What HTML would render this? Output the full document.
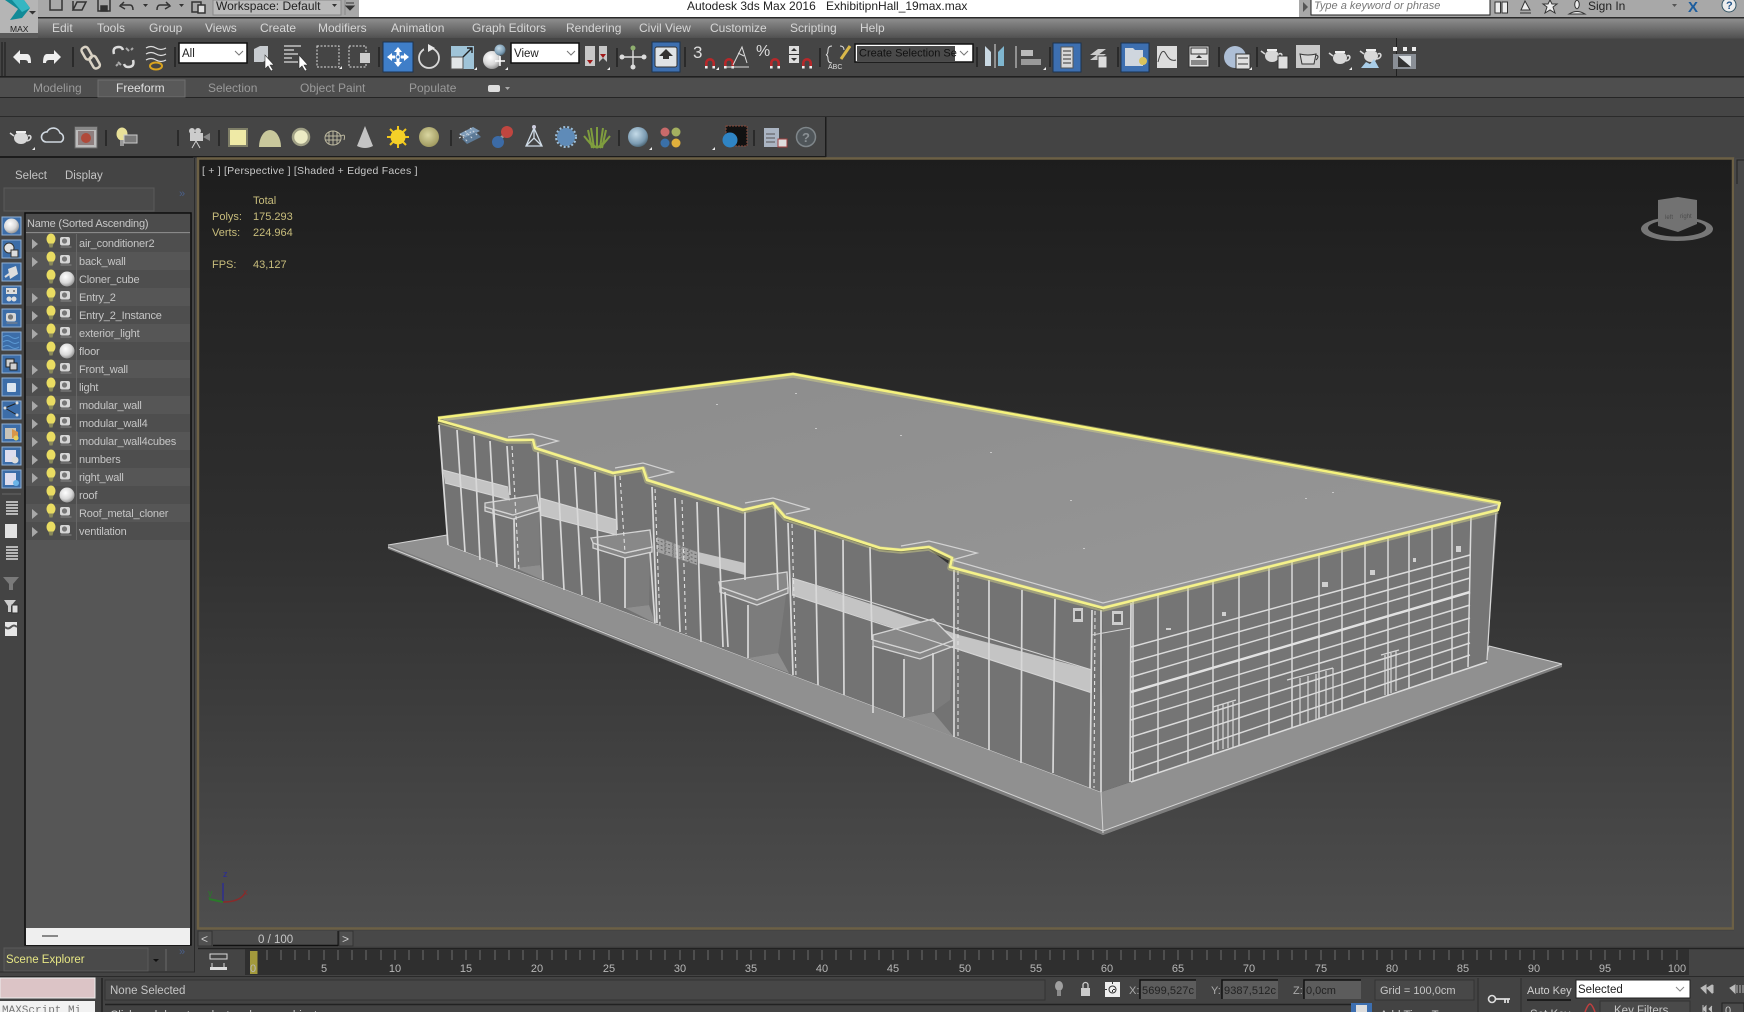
<!DOCTYPE html>
<html><head><meta charset="utf-8"><title>Autodesk 3ds Max 2016</title>
<style>
html,body{margin:0;padding:0;background:#444;width:1744px;height:1012px;overflow:hidden}
svg{display:block;position:absolute;left:0;top:0}
text{font-family:"Liberation Sans",sans-serif}
.m{font-size:12px;fill:#d6d6d6}
.t{font-size:12px;fill:#9a9a9a}
.r{font-size:11px;fill:#c6c6c6;letter-spacing:-.18px}
.s{font-size:11px;fill:#c8bd7c}
.n{font-size:11px;fill:#b8b8b8;text-anchor:middle}
.b{font-size:11.5px;fill:#c4c4c4}
</style></head><body>
<svg width="1744" height="1012" viewBox="0 0 1744 1012" xmlns="http://www.w3.org/2000/svg">
<defs>
<linearGradient id="vp" x1="0" y1="0" x2="0" y2="1"><stop offset="0" stop-color="#1d1d1d"/><stop offset=".5" stop-color="#303030"/><stop offset="1" stop-color="#4e4e4e"/></linearGradient>
<linearGradient id="menu" x1="0" y1="0" x2="0" y2="1"><stop offset="0" stop-color="#8e8e8e"/><stop offset="1" stop-color="#4f4f4f"/></linearGradient>
<linearGradient id="roof" x1="0" y1="0" x2="1" y2="1"><stop offset="0" stop-color="#8c8c8c"/><stop offset="1" stop-color="#979797"/></linearGradient>
<radialGradient id="sph" cx=".4" cy=".35" r=".7"><stop offset="0" stop-color="#fff"/><stop offset=".6" stop-color="#d8d8d8"/><stop offset="1" stop-color="#8a8a8a"/></radialGradient>
<radialGradient id="bsph" cx=".4" cy=".35" r=".7"><stop offset="0" stop-color="#c4dbe8"/><stop offset=".7" stop-color="#7b9bb2"/><stop offset="1" stop-color="#48616f"/></radialGradient>
<radialGradient id="ysph" cx=".45" cy=".4" r=".6"><stop offset="0" stop-color="#d9d6a0"/><stop offset="1" stop-color="#a09a60"/></radialGradient>
<g id="pot"><ellipse cx="0" cy="1" rx="7" ry="6" fill="#d8d8d8"/><path d="M-7-1L-11-4M7-1C11-3 11 3 6 4" stroke="#d8d8d8" stroke-width="1.6" fill="none"/><rect x="-5" y="-6" width="10" height="2" fill="#eee"/></g>
<g id="bulb"><ellipse cx="0" cy="-3" rx="4.500" ry="5.500" fill="#e9dc62"/><path d="M-2.500 1.500h5l-1 4h-3Z" fill="#8a8a5a"/></g>
<g id="obj"><rect x="-5" y="-5" width="10" height="8.500" rx="2" fill="#d6d6d6"/><circle cx="-.5" cy="-1" r="2.600" fill="#777"/><path d="M-4.500 5h11" stroke="#888"/></g>
<path id="arr" d="M-3-5L3 0L-3 5Z" fill="#a8a8a8"/>
<g id="mag"><path d="M-5 5V0a5 5 0 0 1 10 0V5H2.400V0a2.400 2.400 0 0 0-4.800 0V5Z" fill="#b8282a"/><rect x="-5" y="3" width="2.600" height="2.500" fill="#eee"/><rect x="2.400" y="3" width="2.600" height="2.500" fill="#eee"/></g>
<path id="tri" d="M0 3L3 0V3Z" fill="#eee"/>
</defs>

<!-- base -->
<rect width="1744" height="1012" fill="#444"/>
<!-- title bar -->
<rect width="1744" height="17" fill="#a8a8a8"/>
<rect x="359" width="940" height="17" fill="#fff"/>
<rect y="17" width="1744" height="1.500" fill="#2a2a2a"/>
<text x="687" y="10" font-size="12" fill="#222">Autodesk 3ds Max 2016</text>
<text x="826" y="10" font-size="12" fill="#222">ExhibitipnHall_19max.max</text>
<!-- Max logo -->
<rect width="38" height="33" fill="#b5b5b5"/>
<path d="M5 0H24L30 8L22 18L10 20L18 9Z" fill="#118a97"/><path d="M12 0H24L30 8L22 12Z" fill="#35b6c2"/>
<text x="10" y="32" font-size="8.500" fill="#222">MAX</text>
<path d="M29 11h7l-3.500 3.500Z" fill="#333"/>
<!-- QAT -->
<g fill="none" stroke="#333" stroke-width="1.500">
<path d="M50 0V10H62V0"/><path d="M73 10L77 2H86L82 10ZM73 10V1"/><rect x="98" y="-2" width="12" height="13"/><rect x="101" y="6" width="6" height="5" fill="#333"/>
<path d="M124 2L120 6L125 9M120 5H130Q133 5 133 10"/><path d="M166 2L170 6L165 9M170 5H160Q157 5 157 10"/>
<rect x="192" y="2" width="9" height="10"/><rect x="198" y="5" width="7" height="8" fill="#ddd"/></g>
<path d="M143 4h5l-2.500 3ZM179 4h5l-2.500 3Z" fill="#333"/>
<rect x="213" y="0" width="128" height="15" fill="#bbb" stroke="#888"/>
<text x="216" y="10" font-size="12" fill="#222">Workspace: Default</text>
<path d="M332 4h5l-2.500 3Z" fill="#333"/>
<path d="M345 0V15" stroke="#888"/><path d="M346 3h8M346 6h8l-4 4Z" fill="#333" stroke="#333"/>
<!-- search -->
<path d="M1303 2L1303 12L1308 7Z" fill="#555"/>
<rect x="1311" y="-1" width="179" height="16" fill="#fff" stroke="#222"/>
<text x="1314" y="9" font-size="11" font-style="italic" fill="#777">Type a keyword or phrase</text>
<g fill="#eee" stroke="#333"><rect x="1495" y="2" width="5.500" height="11"/><rect x="1502" y="2" width="5.500" height="11"/></g>
<path d="M1525 1L1530 10H1521ZM1520 13H1531" stroke="#333" fill="#eee"/>
<path d="M1550 0l2 4h5l-4 3 2 6-5-3-5 3 2-6-4-3h5Z" fill="#eee" stroke="#333"/>
<path d="M1577 0a4 5 0 0 1 0 9M1577 0a4 5 0 0 0 0 9M1569 14q8-5 16 0Z" fill="#eee" stroke="#333"/>
<text x="1588" y="10" font-size="12" fill="#222">Sign In</text>
<path d="M1672 4h5l-2.500 3Z" fill="#555"/>
<text x="1688" y="12" font-size="15" font-weight="bold" fill="#1c5d9e">X</text>
<circle cx="1729" cy="5" r="7" fill="#eee" stroke="#356"/><text x="1726" y="9" font-size="11" font-weight="bold" fill="#24568a">?</text>

<!-- menu bar -->
<rect x="38" y="18.500" width="1706" height="20" fill="url(#menu)"/>
<rect y="33" width="38" height="5" fill="#5a5a5a"/>
<g class="m">
<text class="m" x="52" y="32">Edit</text><text class="m" x="97" y="32">Tools</text><text class="m" x="149" y="32">Group</text><text class="m" x="205" y="32">Views</text><text class="m" x="260" y="32">Create</text><text class="m" x="318" y="32">Modifiers</text><text class="m" x="391" y="32">Animation</text><text class="m" x="472" y="32">Graph Editors</text><text class="m" x="566" y="32">Rendering</text><text class="m" x="639" y="32">Civil View</text><text class="m" x="710" y="32">Customize</text><text class="m" x="790" y="32">Scripting</text><text class="m" x="860" y="32">Help</text>
</g>

<!-- main toolbar -->
<rect y="38" width="1396" height="38" fill="#454545"/>
<rect y="76" width="1744" height="1.500" fill="#202020"/>
<rect x="1396" y="38" width="1" height="38" fill="#202020"/>
<path d="M2 42V76M5 42V76M2 80V116M5 80V116M2 122V156M5 122V156" stroke="#2a2a2a" stroke-width="1.500"/>
<!-- undo redo -->
<path d="M13 57L20 50V54H27Q31 54 31 63H28Q28 60 25 60H20V64Z" fill="#eee"/>
<path d="M61 57L54 50V54H47Q43 54 43 63H46Q46 60 49 60H54V64Z" fill="#eee"/>
<path d="M73 47V67" stroke="#222" stroke-width="1.500"/>
<!-- link -->
<g fill="none" stroke="#d9d2c4" stroke-width="2.500"><rect x="83" y="47" width="7" height="13" rx="3" transform="rotate(-30 86 53)"/><rect x="91" y="56" width="7" height="13" rx="3" transform="rotate(-30 94 62)"/>
<path d="M114 54Q112 47 119 47Q122 47 123 50M133 60Q135 67 128 67Q125 67 124 64" stroke="#dcdcdc"/></g>
<path d="M126 48l3 3M131 50l2-2M118 62l3 3M116 66l2-2" stroke="#aaa" stroke-width="2"/>
<path d="M146 48q5-3 10 0t10 0M146 54q5-3 10 0t10 0M146 60q5-3 10 0t10 0" fill="none" stroke="#ddd" stroke-width="1.300"/>
<ellipse cx="156" cy="66" rx="6" ry="3.500" fill="none" stroke="#d9a31f" stroke-width="2"/>
<path d="M175 47V67" stroke="#222" stroke-width="1.500"/>
<rect x="179" y="43" width="68" height="20" fill="#fff" stroke="#111" stroke-width="1.500"/>
<text x="182" y="57" font-size="11.500" fill="#222">All</text>
<path d="M235 51l4 4 4-4" fill="none" stroke="#777"/>
<!-- sel obj -->
<path d="M254 49l6-3h8v13l-5 3h-9Z" fill="#c8ccd0"/><path d="M265 55V69L268 66L271 71L273 70L270 65H274Z" fill="#fff" stroke="#333" stroke-width=".6"/>
<path d="M284 46h17M284 50h10M284 54h14M284 58h8M284 62h14" stroke="#ddd" stroke-width="1.300"/><path d="M299 55V69L302 66L305 71L307 70L304 65H308Z" fill="#fff" stroke="#333" stroke-width=".6"/>
<rect x="317" y="46" width="22" height="21" fill="none" stroke="#ddd" stroke-dasharray="2 1.500"/><use href="#tri" x="339" y="66"/>
<rect x="349" y="46" width="17" height="21" fill="none" stroke="#ddd" stroke-dasharray="2 1.500"/><rect x="360" y="53" width="10" height="10" fill="#ccc"/>
<path d="M379 47V67" stroke="#222" stroke-width="1.500"/>
<!-- move -->
<rect x="383" y="42" width="30" height="30" fill="#3f7ec8" stroke="#1c3350"/>
<path d="M398 47l4 5h-2.500v3h-3v-3H394ZM398 67l4-5h-2.500v-3h-3v3H394ZM387 57l5-4v2.500h3v3h-3V61ZM409 57l-5-4v2.500h-3v3h3V61Z" fill="#fff"/><circle cx="398" cy="57" r="2" fill="none" stroke="#fff"/>
<circle cx="429" cy="58" r="10" fill="none" stroke="#d8d8d8" stroke-width="1.800"/><path d="M428 44l7 4-7 4Z" fill="#e8e8e8"/><rect x="424" y="44" width="4" height="6" fill="#454545"/>
<!-- scale -->
<rect x="451" y="46" width="23" height="23" fill="#9fc4d8"/><rect x="451" y="57" width="12" height="12" fill="#e2e6e8" stroke="#555"/><path d="M463 57L472 48M467 48h5v5" stroke="#222" stroke-width="1.400" fill="none"/><use href="#tri" x="474" y="67"/>
<circle cx="492" cy="60" r="9" fill="url(#sph)"/><circle cx="500" cy="50" r="5.500" fill="url(#bsph)"/><path d="M500 56v10M495 61h10" stroke="#fff" stroke-width="1.500"/><use href="#tri" x="505" y="67"/>
<rect x="511" y="43" width="68" height="20" fill="#fff" stroke="#111" stroke-width="1.500"/>
<text x="514" y="57" font-size="11.500" fill="#222">View</text>
<path d="M567 51l4 4 4-4" fill="none" stroke="#777"/>
<!-- named tools -->
<rect x="585" y="46" width="10" height="20" fill="#c8c8c8"/><path d="M590 64l-3-4h6Z" fill="#a01818"/><path d="M599 46h8v16l-4-4-4 4Z" fill="#c8c8c8"/><path d="M603 58l-3-4h6Z" fill="#a01818"/><use href="#tri" x="607" y="67"/>
<path d="M617 48V67" stroke="#222" stroke-width="1.500"/>
<path d="M622 57h22M633 47v20" stroke="#ddd" stroke-width="1.400"/><circle cx="633" cy="48" r="2.500" fill="#8faf6f"/><circle cx="622" cy="57" r="2.500" fill="#ddd"/><circle cx="644" cy="57" r="2.500" fill="#ddd"/><circle cx="633" cy="67" r="2.500" fill="#ddd"/>
<rect x="652" y="42" width="28" height="30" fill="#3d6fb0" stroke="#1c3350"/><rect x="655" y="47" width="22" height="20" rx="2" fill="#dfe3e6" stroke="#333"/><path d="M666 49l7 7h-4v3h-6v-3h-4Z" fill="#333"/>
<path d="M685 47V67" stroke="#222" stroke-width="1.500"/>
<!-- snaps -->
<text x="693" y="58" font-size="17" fill="#ddd">3</text><use href="#mag" x="710" y="63"/><use href="#tri" x="716" y="67"/>
<use href="#mag" x="729" y="63"/><path d="M726 67H749M733 65L742 47L747 63M738 53l6 3" fill="none" stroke="#ddd"/>
<text x="756" y="56" font-size="16" fill="#ddd">%</text><use href="#mag" x="775" y="63"/>
<rect x="789" y="46" width="10" height="17" fill="#ddd"/><path d="M794 48l3 3h-6ZM794 61l3-3h-6Z" fill="#333"/><path d="M789 54.500h10" stroke="#333"/><use href="#mag" x="807" y="63"/>
<path d="M820 48V67" stroke="#222" stroke-width="1.500"/>
<path d="M832 46q-4 0-4 4t-2 5q2 0 2 4t4 4M840 46q4 0 4 4" fill="none" stroke="#ddd"/><path d="M841 59L850 46" stroke="#d9b84a" stroke-width="3"/><text x="828" y="69" font-size="7" fill="#ddd">ABC</text>
<rect x="855" y="44" width="118" height="18" fill="#fff" stroke="#111" stroke-width="1.500"/>
<rect x="857" y="46" width="98" height="15" fill="#4a4a4a"/>
<text x="859" y="56.500" font-size="11" fill="#111">Create Selection Se</text>
<path d="M960 51l4 4 4-4" fill="none" stroke="#777"/>
<path d="M977 47V67" stroke="#222" stroke-width="1.500"/>
<!-- mirror align -->
<path d="M985 46l6 6v14h-6Z" fill="#c9d8e2"/><path d="M1004 46l-6 6v14h6Z" fill="#7fb6cf"/><path d="M995 44v24" stroke="#ddd"/>
<path d="M1016 46v22" stroke="#ddd"/><rect x="1021" y="50" width="12" height="6" fill="#bbb"/><rect x="1021" y="59" width="20" height="6" fill="#999"/><use href="#tri" x="1043" y="67"/>
<path d="M1050 47V67" stroke="#222" stroke-width="1.500"/>
<rect x="1053" y="43" width="28" height="29" fill="#3d6fb0" stroke="#1c3350"/><rect x="1061" y="47" width="12" height="21" fill="#d8d8d8" stroke="#555"/><path d="M1063 51h8M1063 55h8M1063 59h8M1063 63h8" stroke="#555" stroke-width="1.200"/>
<path d="M1090 55l8-6h8l-8 6ZM1090 60l8-6h8l-8 6Z" fill="#ccc"/><rect x="1098" y="56" width="9" height="12" fill="#ddd" stroke="#444"/>
<path d="M1118 47V67" stroke="#222" stroke-width="1.500"/>
<rect x="1121" y="43" width="28" height="29" fill="#3d6fb0" stroke="#1c3350"/><path d="M1125 48h8l2 2h8v16h-18Z" fill="#cfd6de"/><circle cx="1143" cy="61" r="4" fill="#d9c35e"/>
<rect x="1157" y="46" width="20" height="22" fill="#ddd"/><path d="M1158 62q4-16 8-8t10 6" fill="none" stroke="#444"/>
<rect x="1189" y="46" width="20" height="21" fill="#e0e0e0" stroke="#333"/><rect x="1191" y="48" width="16" height="6" fill="#e0e0e0" stroke="#333"/><rect x="1191" y="60" width="16" height="5" fill="#888"/><path d="M1199 55l3 3h-6Z" fill="#333"/>
<path d="M1219 47V67" stroke="#222" stroke-width="1.500"/>
<circle cx="1235" cy="57" r="11" fill="#aebfd6"/><rect x="1236" y="54" width="14" height="15" fill="#e0e0e0" stroke="#333"/><path d="M1238 58h10M1238 64h10" stroke="#333"/><use href="#tri" x="1249" y="67"/>
<path d="M1257 47V67" stroke="#222" stroke-width="1.500"/>
<use href="#pot" x="1272" y="55"/><rect x="1278" y="56" width="10" height="13" fill="#ddd" stroke="#333"/>
<rect x="1296" y="45" width="24" height="23" fill="#c8c8c8"/><path d="M1300 54q8 2 16 0l-2 10h-12Z" fill="#d8d8d8" stroke="#333"/><path d="M1316 55q4 1 0 5" fill="none" stroke="#333"/>
<use href="#pot" x="1340" y="57"/><use href="#tri" x="1349" y="67"/>
<use href="#pot" x="1371" y="55"/><path d="M1361 68l5-6 4 2 4-5 5 9Z" fill="#a9cde8"/>
<path d="M1393 47h4v4h-4ZM1403 47h4v4h-4ZM1412 47h4v4h-4Z" fill="#eee"/><rect x="1393" y="54" width="23" height="15" fill="#8a8f96"/><rect x="1398" y="56" width="13" height="11" fill="#dfe3e6"/><path d="M1398 56l13 11h-13Z" fill="#333"/>

<!-- ribbon -->
<rect y="78" width="1744" height="19" fill="#4e4e4e"/>
<rect y="97" width="1744" height="1" fill="#252525"/>
<rect y="98" width="1744" height="18" fill="#454545"/>
<rect y="116" width="1744" height="1" fill="#2b2b2b"/>
<rect x="98" y="80" width="87" height="17" fill="#595959" stroke="#6e6e6e"/>
<text class="t" x="33" y="92">Modeling</text>
<text x="116" y="92" font-size="12" fill="#e0e0e0">Freeform</text>
<text class="t" x="208" y="92">Selection</text>
<text class="t" x="300" y="92">Object Paint</text>
<text class="t" x="409" y="92">Populate</text>
<rect x="488" y="85" width="12" height="7" rx="2" fill="#ddd"/><path d="M505 87h5l-2.500 3Z" fill="#aaa"/>

<!-- command toolbar -->
<rect y="117" width="826" height="39" fill="#454545"/>
<rect y="156" width="826" height="1.500" fill="#1c1c1c"/><rect x="825" y="117" width="1.500" height="40" fill="#1c1c1c"/>
<use href="#pot" x="21" y="137"/><use href="#tri" x="32" y="147"/>
<path d="M46 142a5 5 0 0 1 1-10a7 7 0 0 1 13 1a5 5 0 0 1 1 9Z" fill="none" stroke="#d0d8e0" stroke-width="1.600"/>
<rect x="75" y="127" width="22" height="21" fill="#bcbcbc" stroke="#666"/><rect x="75" y="127" width="22" height="3" fill="#888"/><rect x="78" y="131" width="16" height="14" fill="#8e7f7f"/><circle cx="86" cy="138" r="5" fill="#b04a3a"/>
<path d="M106 130V146" stroke="#222" stroke-width="1.500"/>
<ellipse cx="122" cy="134" rx="5.500" ry="6.500" fill="#e8e098"/><path d="M120 140h4v6h-4Z" fill="#999"/>
<rect x="124" y="135" width="13" height="8" fill="#7a7a7a" stroke="#ccc"/>
<path d="M178 130V146M219 130V146" stroke="#222" stroke-width="1.500"/>
<rect x="190" y="133" width="13" height="8" fill="#ccc"/><circle cx="192" cy="131" r="3" fill="#ccc"/><circle cx="198" cy="131" r="3" fill="#ccc"/><path d="M203 137l7-4v8Z" fill="#888"/><path d="M196 141l-4 7M196 141l4 7" stroke="#ccc"/>
<rect x="229" y="129" width="18" height="17" fill="#efeaa6" stroke="#7f7f68" stroke-width="2"/>
<path d="M259 147A11 17 0 0 1 281 147Z" fill="#c9c89c"/>
<circle cx="301" cy="137" r="8" fill="#ecebc4" stroke="#9f9f85" stroke-width="2.500"/>
<g fill="none" stroke="#bdb9a0" stroke-width="1"><ellipse cx="333" cy="138" rx="8" ry="7"/><path d="M325 136h16M325 140h16M329 132v12M333 131v14M337 132v12M341 136q5-3 3 4"/></g>
<path d="M365 126l8 20q-8 4-16 0Z" fill="#c4c4c4"/>
<g stroke="#f2c71a" stroke-width="2"><path d="M398 126v22M387 137h22M390 129l16 16M406 129l-16 16"/></g><circle cx="398" cy="137" r="7.500" fill="#f5d028"/>
<circle cx="429" cy="137" r="10" fill="url(#ysph)"/>
<path d="M451 130V146" stroke="#222" stroke-width="1.500"/>
<g fill="#7f9cb8"><path d="M459 134l14-7 7 4-14 7Z"/><path d="M462 139l14-7 5 5-14 7Z" fill="#5d7a96"/></g><path d="M460 134l8 8M465 131l8 8M470 128l8 8M459 138l12-6" stroke="#d0d8e0" stroke-dasharray="2 2"/>
<path d="M497 141l10-8" stroke="#999" stroke-width="3"/><circle cx="498" cy="142" r="6" fill="#3c6ba6"/><circle cx="507" cy="132" r="6" fill="#c04640"/>
<path d="M534 128l-8 18h16ZM526 146l8-8 8 8M534 128v10" fill="none" stroke="#cfdbe6" stroke-width="1.300"/><circle cx="534" cy="127" r="2" fill="#ccd"/>
<circle cx="566" cy="137" r="9" fill="#5f8bb8"/><circle cx="566" cy="137" r="10" fill="none" stroke="#9cc0dd" stroke-width="2" stroke-dasharray="2 2"/>
<path d="M592 148L588 130M594 148L591 128M597 148V127M600 148L603 128M602 148L606 130M594 148L584 136M600 148L610 136M597 148L587 140M597 148L607 140" stroke="#7f9d3e" stroke-width="2"/>
<path d="M619 130V146" stroke="#222" stroke-width="1.500"/>
<circle cx="638" cy="137" r="10" fill="url(#bsph)"/><use href="#tri" x="649" y="147"/>
<circle cx="665" cy="132" r="4.500" fill="#c86a6a"/><circle cx="676" cy="132" r="4.500" fill="#a4b060"/><circle cx="665" cy="143" r="4.500" fill="#3a70a8"/><circle cx="676" cy="143" r="4.500" fill="#e0b03c"/>
<use href="#tri" x="712" y="147"/>
<rect x="726" y="126" width="21" height="20" fill="#111" stroke="#8a4a3a" stroke-dasharray="2 1"/><circle cx="730" cy="140" r="7.500" fill="#2f84c4"/>
<path d="M754 130V146" stroke="#222" stroke-width="1.500"/>
<rect x="764" y="128" width="15" height="19" fill="#aab4c2"/><path d="M766 134h9M766 138h9M766 142h9" stroke="#555"/><rect x="778" y="139" width="9" height="8" fill="#ddd" stroke="#a04040"/>
<circle cx="806" cy="137" r="9.500" fill="#4f5559" stroke="#7f868a" stroke-width="1.500"/><text x="802" y="142" font-size="13" font-weight="bold" fill="#8a9094">?</text>

<!-- left panel -->
<rect y="158" width="197" height="818" fill="#444"/>
<path d="M0 157.500H193" stroke="#1c1c1c"/>
<text x="15" y="179" font-size="11.500" fill="#c4c4c4">Select</text>
<text x="65" y="179" font-size="11.500" fill="#c4c4c4">Display</text>
<rect x="4" y="188" width="150" height="23" fill="#4a4a4a" stroke="#5a5a5a"/>
<text x="179" y="197" font-size="11" fill="#4a5f88">»</text>
<path d="M194.500 158V972H0" fill="none" stroke="#2b2b2b"/>

<!-- left buttons -->
<g fill="#3c6da8" stroke="#8fb0d4">
<rect x="2" y="217" width="19" height="18"/><rect x="2" y="240" width="19" height="18"/><rect x="2" y="263" width="19" height="18"/><rect x="2" y="286" width="19" height="18"/><rect x="2" y="309" width="19" height="18"/><rect x="2" y="332" width="19" height="18"/><rect x="2" y="355" width="19" height="18"/><rect x="2" y="378" width="19" height="18"/><rect x="2" y="401" width="19" height="18"/><rect x="2" y="424" width="19" height="18"/><rect x="2" y="447" width="19" height="18"/><rect x="2" y="470" width="19" height="18"/>
</g>
<circle cx="11.500" cy="226" r="7.500" fill="url(#sph)"/>
<circle cx="9" cy="248" r="5" fill="#e2e2e2" stroke="#333"/><rect x="11" y="250" width="7" height="7" fill="#ddd" stroke="#333"/>
<path d="M8 269l8-3 2 8-8 5Z" fill="#ddd"/><path d="M5 277l7-5" stroke="#ddd" stroke-width="2"/>
<rect x="6" y="288" width="11" height="6" fill="#ddd"/><circle cx="9" cy="299" r="2.500" fill="#ddd"/><circle cx="14" cy="299" r="2.500" fill="#ddd"/><path d="M7 291h2M13 291h2" stroke="#333"/>
<use href="#obj" x="11" y="318" />
<path d="M3 337q4-3 8 0t8 0M3 342q4-3 8 0t8 0M3 347q4-3 8 0t8 0" fill="none" stroke="#5c9ad4"/>
<rect x="6" y="359" width="8" height="8" fill="#d0d0d0" stroke="#222"/><rect x="10" y="363" width="7" height="7" fill="#d0d0d0" stroke="#222"/>
<rect x="7" y="383" width="9" height="9" rx="1" fill="#dbe5ef"/>
<path d="M5 408l12-5M5 408l12 7" stroke="#222"/><circle cx="5" cy="408" r="1.500" fill="#ddd"/><circle cx="17" cy="403" r="1.500" fill="#ddd"/><circle cx="17" cy="415" r="1.500" fill="#ddd"/>
<rect x="5" y="428" width="11" height="11" fill="#c9c4b8"/><path d="M12 429l6 3v6h-6Z" fill="#d8964a"/><circle cx="16" cy="438" r="2.500" fill="#e8d058"/>
<rect x="5" y="450" width="11" height="12" fill="#dde"/><circle cx="15" cy="460" r="3.500" fill="#ddd"/>
<rect x="5" y="473" width="11" height="12" fill="#dde"/><circle cx="16" cy="483" r="3" fill="#6bb4e8"/>
<path d="M2 494H21" stroke="#666"/>
<path d="M6 502h12M6 505h12M6 508h12M6 511h12M6 514h12" stroke="#ddd" stroke-width="1.400"/>
<rect x="5" y="524" width="12" height="14" fill="#e2e2e2"/>
<path d="M6 547h12M6 550h12M6 553h12M6 556h12M6 559h12" stroke="#ddd" stroke-width="1.400"/>
<path d="M3 577H19L13 584V590H9V584Z" fill="#7a7a7a"/>
<path d="M4 600H16L11 606V612H8V606Z" fill="#ccc"/><rect x="12" y="605" width="6" height="8" fill="#ddd" stroke="#333"/>
<rect x="5" y="622" width="12" height="14" fill="#e6e6e6"/><path d="M5 627q3 3 6 0t6 0" stroke="#555" fill="none" stroke-width="2"/>

<!-- scene list -->
<rect x="25" y="213" width="166" height="732" fill="#565656" stroke="#0c0c0c" stroke-width="1.500"/>
<rect x="26" y="214" width="164" height="19" fill="#4c4c4c"/><path d="M26 232.500H190" stroke="#888"/>
<text x="27" y="227" font-size="11" letter-spacing="-.2" fill="#c8c8c8">Name (Sorted Ascending)</text>
<g fill="#4e4e4e"><rect x="26" y="234" width="164" height="18"/><rect x="26" y="270" width="164" height="18"/><rect x="26" y="306" width="164" height="18"/><rect x="26" y="342" width="164" height="18"/><rect x="26" y="378" width="164" height="18"/><rect x="26" y="414" width="164" height="18"/><rect x="26" y="450" width="164" height="18"/><rect x="26" y="486" width="164" height="18"/><rect x="26" y="522" width="164" height="18"/></g>
<path d="M76.500 234V540" stroke="#666"/>
<rect x="26" y="928" width="164" height="17" fill="#efefef"/><rect x="42" y="935" width="16" height="2" fill="#888"/>
<g id="rows">
<text class="r" x="79" y="247">air_conditioner2</text>
<text class="r" x="79" y="265">back_wall</text>
<text class="r" x="79" y="283">Cloner_cube</text>
<text class="r" x="79" y="301">Entry_2</text>
<text class="r" x="79" y="319">Entry_2_Instance</text>
<text class="r" x="79" y="337">exterior_light</text>
<text class="r" x="79" y="355">floor</text>
<text class="r" x="79" y="373">Front_wall</text>
<text class="r" x="79" y="391">light</text>
<text class="r" x="79" y="409">modular_wall</text>
<text class="r" x="79" y="427">modular_wall4</text>
<text class="r" x="79" y="445">modular_wall4cubes</text>
<text class="r" x="79" y="463">numbers</text>
<text class="r" x="79" y="481">right_wall</text>
<text class="r" x="79" y="499">roof</text>
<text class="r" x="79" y="517">Roof_metal_cloner</text>
<text class="r" x="79" y="535">ventilation</text>
</g>
<use href="#arr" x="35" y="244"/><use href="#arr" x="35" y="262"/><use href="#arr" x="35" y="298"/><use href="#arr" x="35" y="316"/><use href="#arr" x="35" y="334"/><use href="#arr" x="35" y="370"/><use href="#arr" x="35" y="388"/><use href="#arr" x="35" y="406"/><use href="#arr" x="35" y="424"/><use href="#arr" x="35" y="442"/><use href="#arr" x="35" y="460"/><use href="#arr" x="35" y="478"/><use href="#arr" x="35" y="514"/><use href="#arr" x="35" y="532"/>
<use href="#bulb" x="51" y="242"/><use href="#bulb" x="51" y="260"/><use href="#bulb" x="51" y="278"/><use href="#bulb" x="51" y="296"/><use href="#bulb" x="51" y="314"/><use href="#bulb" x="51" y="332"/><use href="#bulb" x="51" y="350"/><use href="#bulb" x="51" y="368"/><use href="#bulb" x="51" y="386"/><use href="#bulb" x="51" y="404"/><use href="#bulb" x="51" y="422"/><use href="#bulb" x="51" y="440"/><use href="#bulb" x="51" y="458"/><use href="#bulb" x="51" y="476"/><use href="#bulb" x="51" y="494"/><use href="#bulb" x="51" y="512"/><use href="#bulb" x="51" y="530"/>
<use href="#obj" x="65" y="242"/><use href="#obj" x="65" y="260"/><use href="#obj" x="65" y="296"/><use href="#obj" x="65" y="314"/><use href="#obj" x="65" y="332"/><use href="#obj" x="65" y="368"/><use href="#obj" x="65" y="386"/><use href="#obj" x="65" y="404"/><use href="#obj" x="65" y="422"/><use href="#obj" x="65" y="440"/><use href="#obj" x="65" y="458"/><use href="#obj" x="65" y="476"/><use href="#obj" x="65" y="512"/><use href="#obj" x="65" y="530"/>
<circle cx="67" cy="279" r="7.500" fill="url(#sph)"/><circle cx="67" cy="351" r="7.500" fill="url(#sph)"/><circle cx="67" cy="495" r="7.500" fill="url(#sph)"/>
<!-- scene explorer bar -->
<rect x="4" y="948" width="144" height="23" fill="#4a4a4a" stroke="#5a5a5a"/>
<text x="6" y="963" font-size="11.500" fill="#e6e684">Scene Explorer</text>
<path d="M153 959h6l-3 3Z" fill="#111"/><path d="M166 949V971" stroke="#6a6a6a"/>
<text x="179" y="955" font-size="11" fill="#4a5f88">»</text>

<!-- viewport -->
<rect x="198" y="158" width="1535" height="771" fill="url(#vp)"/>
<rect x="198" y="158.500" width="1535" height="770" fill="none" stroke="#6c6045" stroke-width="2.500"/>
<text x="202" y="174" font-size="10.500" fill="#c8c8c8" letter-spacing=".22" xml:space="preserve">[ + ] [Perspective ] [Shaded + Edged Faces ]</text>
<text class="s" x="253" y="204">Total</text>
<text class="s" x="212" y="220">Polys:</text><text class="s" x="253" y="220">175.293</text>
<text class="s" x="212" y="236">Verts:</text><text class="s" x="253" y="236">224.964</text>
<text class="s" x="212" y="268">FPS:</text><text class="s" x="253" y="268">43,127</text>
<!-- view cube -->
<ellipse cx="1677" cy="229" rx="36" ry="12" fill="#777"/><ellipse cx="1677" cy="228" rx="29" ry="8.500" fill="#1f1f1f"/>
<path d="M1658 200L1678 197L1697 200V224L1678 232L1658 226Z" fill="#727272"/>
<text x="1665" y="219" font-size="6" fill="#4c4c4c">left</text><text x="1680" y="218" font-size="6" fill="#4c4c4c">right</text>
<!-- axis -->
<path d="M223 883V902" stroke="#2a2a9a" stroke-width="1.300"/><text x="223" y="877" font-size="9" fill="#2a2a9a">z</text>
<path d="M223 902Q240 902 245 893" fill="none" stroke="#8a2a2a" stroke-width="1.500"/><text x="243" y="895" font-size="9" fill="#8a2a2a">x</text>
<path d="M223 902L209 899" stroke="#2a7a2a" stroke-width="2"/><text x="208" y="896" font-size="9" fill="#2a7a2a">y</text>

<!-- BUILDING -->
<path d="M388 545L447 535L448 545L1101 792L1487 662L1489 646L1562 664L1103 835Z" fill="#909090"/>
<path d="M388 545L1103 831L1562 664L1562 667L1103 835L388 549Z" fill="#7d7d7d"/>
<path d="M388 545L447 535M388 547L1103 831L1562 664M1489 646L1562 664M1101 792L1103 833M1486 662L1489 646M448 545L1101 792" fill="none" stroke="#d2d2d2" stroke-width="1"/>
<!-- front wall -->
<path d="M439 423L507 440L533 442L537 450L613 473L643 470L650 482L743 510L773 505L785 519L880 550L901 552L929 549L950 565L1103 610L1101 792L448 545Z" fill="#737373"/>
<!-- right wall -->
<path d="M1103 608L1498 510L1487 662L1101 792Z" fill="#757575"/>
<!-- bands -->
<g fill="#c4c4c4">
<path d="M443 470L508 487L510 500L445 483Z"/><path d="M540 498L617 520L617 535L540 515Z"/>
<path d="M698 552L745 563L745 575L698 563Z"/><path d="M792 578L880 607L880 623L792 595Z"/><path d="M880 607L959 635L959 650L880 623Z"/><path d="M959 635L1092 670L1092 693L959 650Z"/>
</g>
<path d="M657 537L697 552L697 565L657 552Z" fill="#a2a2a2"/>
<path d="M657 540L697 555M657 544L697 559M657 548L697 563M665 540v14M673 543v14M681 546v14M689 549v14" stroke="#666" stroke-dasharray="2 2"/>
<!-- recess floors and bays -->
<g fill="#8e8e8e"><path d="M515 568L540 565L543 580Z"/><path d="M625 608L649 605L655 623Z"/><path d="M748 658L778 653L789 673Z"/><path d="M904 718L933 712L954 737Z"/></g>
<g fill="#7c7c7c"><path d="M513 516L539 507L540 565L515 568Z"/><path d="M625 553L650 547L649 605L625 608Z"/><path d="M748 600L787 588L778 653L748 658Z"/><path d="M904 652L954 640L950 700L933 712L904 718Z"/></g>
<!-- canopies -->
<g fill="#888" stroke="#d4d4d4" stroke-width="1.300">
<path d="M485 507L513 515L539 507V511L513 519L485 511Z"/><path d="M593 543L625 553L652 547V552L625 558L593 548Z"/><path d="M720 587L757 600L788 588V593L757 605L720 592Z"/><path d="M873 640L920 653L954 640V646L920 659L873 646Z"/>
<path d="M485 503L537 495L539 507L513 515L485 507Z"/><path d="M591 538L650 530L652 547L625 553L593 543Z"/><path d="M719 582L787 572L788 588L757 600L720 587Z"/><path d="M873 635L933 619L954 640L920 653L873 640Z"/>
</g>
<!-- mullions -->
<path fill="none" stroke="#d8d8d8" stroke-width="1.700" d="M439 425L448 545M457 430L465 552M474 436L480 560M490 441L497 567M507 446L510 495M493 510L497 567M514 519L515 568M538 452L543 580M557 460L564 590M575 467L582 595M595 472L600 602M615 475L617 530M598 548L600 602M625 558L625 608M650 552L655 623M652 487L657 623M675 498L680 632M697 502L701 642M718 507L723 647M745 512L745 580M725 592L728 647M748 605L748 658M775 505L778 590M788 523L793 675M815 530L818 685M843 540L844 695M870 547L872 640M873 646L873 713M904 659L904 717M933 653L933 712M954 570L954 737M989 580L989 750M1022 590L1021 763M1055 599L1053 773M1092 610L1090 788M1101 610L1101 792M1131 603L1130 782"/>
<path fill="none" stroke="#e0e0e0" stroke-width="1.100" stroke-dasharray="4 3" d="M512 446L519 570M620 476L625 553M655 489L660 625M682 500L686 634M792 524L796 677M958 571L958 738M1095 611L1094 788"/>
<path fill="none" stroke="#d4d4d4" stroke-width="1.100" d="M443 470L508 487M445 483L510 500M540 498L617 520M540 515L617 535M792 578L1092 670M792 595L1092 693M1092 635L1131 628"/>
<!-- right wall grid -->
<path fill="none" stroke="#dadada" stroke-width="1.500" d="M1133 601L1133 781M1158 594L1158 773M1188 587L1188 763M1213 581L1213 754M1239 574L1239 745M1269 567L1269 735M1292 561L1292 728M1319 554L1319 719M1342 549L1342 711M1365 543L1365 703M1388 537L1388 695M1409 532L1409 688M1432 527L1432 680M1452 522L1452 674M1471 517L1468 667"/>
<path fill="none" stroke="#dcdcdc" stroke-width="1.500" d="M1131 647L1470 555M1131 662L1470 567M1131 677L1470 578M1131 707L1470 605M1131 720L1470 618M1131 737L1470 632M1131 753L1470 643M1131 770L1470 655M1131 782L1487 662"/>
<path fill="none" stroke="#e2e2e2" stroke-width="2.500" d="M1131 692L1470 592"/>
<path fill="none" stroke="#d8d8d8" stroke-width="1.200" d="M1496 513L1487 660M1213 707L1236 700M1218 705V750M1223 704V749M1228 703V748M1233 702V747M1287 680L1333 668M1292 680V728M1300 678V726M1308 676V722M1316 674V720M1326 671V715M1333 668V713M1381 655L1399 650M1385 655V695M1391 653V693M1396 651V691"/>
<path fill="#ccc" d="M1073 608h10v14h-10ZM1112 611h11v14h-11Z"/><path fill="#666" d="M1075 611h6v8h-6ZM1114 614h7v8h-7Z"/>
<g fill="#d0d0d0"><rect x="1166" y="628" width="5" height="2"/><rect x="1222" y="612" width="4" height="4"/><rect x="1322" y="582" width="6" height="5"/><rect x="1370" y="570" width="5" height="5"/><rect x="1413" y="558" width="3" height="4"/><rect x="1456" y="546" width="5" height="6"/></g>
<!-- roof -->
<path d="M438 418L793 374L1500 503L1498 510L1103 608L950 567L952 558L929 547L901 550L880 548L785 517L773 503L743 510L647 480L643 468L613 473L535 448L533 440L507 440Z" fill="url(#roof)"/>
<path fill="none" stroke="#d2d2d2" stroke-width="1.200" d="M508 437L532 434L558 441L536 447M615 468L643 463L673 472L648 478M745 503L773 498L810 509L786 514M901 546L929 541L977 553L952 560M952 560L1103 603L1500 504"/>
<!-- yellow outline -->
<path fill="none" stroke="#d8d68a" stroke-opacity=".45" stroke-width="5.500" stroke-linejoin="round" d="M438 419L793 375L1500 503M438 421L507 441L533 441L535 449L613 474L643 469L647 481L743 511L773 504L785 518L880 549L901 551L929 548L952 559L950 568L1103 609L1498 511"/>
<path fill="none" stroke="#f5f27c" stroke-width="2.500" stroke-linejoin="round" d="M438 418L793 374L1500 503"/>
<path fill="none" stroke="#f5f28a" stroke-width="2.500" stroke-linejoin="round" d="M438 420L507 440L533 440L535 448L613 473L643 468L647 480L743 510L773 503L785 517L880 548L901 550L929 547L952 558L950 567L1103 608L1498 510L1500 502"/>
<!-- specks -->
<g fill="#c8c8c8"><rect x="795" y="393" width="2" height="1"/><rect x="716" y="404" width="2" height="1"/><rect x="815" y="428" width="2" height="1"/><rect x="900" y="435" width="2" height="1"/><rect x="990" y="452" width="2" height="1"/><rect x="1070" y="500" width="2" height="1"/><rect x="1305" y="498" width="2" height="1"/><rect x="1332" y="492" width="2" height="1"/><rect x="1083" y="548" width="2" height="1"/></g>

<!-- right strip -->
<rect x="1734" y="158" width="10" height="775" fill="#484848"/>
<path d="M1744 160H1737V184" fill="none" stroke="#222"/>

<!-- slider -->
<rect x="198" y="931" width="1546" height="15" fill="#484848"/>
<rect x="198" y="931" width="14" height="15" fill="#505050" stroke="#333"/><text x="201" y="943" font-size="12" fill="#ccc">&lt;</text>
<rect x="213" y="931" width="125" height="14" fill="#4b4b4b"/><path d="M213 945.500H338" stroke="#111" stroke-width="1.500"/><path d="M338 931V946" stroke="#111"/>
<text x="258" y="943" font-size="11.500" fill="#c6c6c6">0 / 100</text>
<rect x="339" y="931" width="14" height="15" fill="#505050" stroke="#333"/><text x="342" y="943" font-size="12" fill="#ccc">&gt;</text>
<path d="M198 948.500H1744" stroke="#222" stroke-width="1.500"/>
<!-- timeline -->
<rect x="245" y="949" width="1444" height="26" fill="#2f2f2f"/>
<rect x="210" y="954" width="17" height="5" fill="none" stroke="#ddd"/><path d="M212 963v4M224 963v4" stroke="#ddd"/><rect x="210" y="967" width="17" height="3" fill="#ddd"/>
<path stroke="#6e6e6e" stroke-width="1" d="M267 950v10M281 950v10M295 950v10M309 950v10M324 950v10M338 950v10M352 950v10M366 950v10M381 950v10M395 950v10M409 950v10M423 950v10M438 950v10M452 950v10M466 950v10M480 950v10M495 950v10M509 950v10M523 950v10M537 950v10M552 950v10M566 950v10M580 950v10M594 950v10M609 950v10M623 950v10M637 950v10M651 950v10M665 950v10M680 950v10M694 950v10M708 950v10M722 950v10M737 950v10M751 950v10M765 950v10M779 950v10M794 950v10M808 950v10M822 950v10M836 950v10M851 950v10M865 950v10M879 950v10M893 950v10M908 950v10M922 950v10M936 950v10M950 950v10M965 950v10M979 950v10M993 950v10M1007 950v10M1021 950v10M1036 950v10M1050 950v10M1064 950v10M1078 950v10M1093 950v10M1107 950v10M1121 950v10M1135 950v10M1150 950v10M1164 950v10M1178 950v10M1192 950v10M1207 950v10M1221 950v10M1235 950v10M1249 950v10M1264 950v10M1278 950v10M1292 950v10M1306 950v10M1321 950v10M1335 950v10M1349 950v10M1363 950v10M1377 950v10M1392 950v10M1406 950v10M1420 950v10M1434 950v10M1449 950v10M1463 950v10M1477 950v10M1491 950v10M1506 950v10M1520 950v10M1534 950v10M1548 950v10M1563 950v10M1577 950v10M1591 950v10M1605 950v10M1620 950v10M1634 950v10M1648 950v10M1662 950v10M1677 950v10"/>
<rect x="250" y="951" width="7.500" height="23" fill="#a39a3c"/>
<text class="n" x="253" y="972">0</text><text class="n" x="324" y="972">5</text><text class="n" x="395" y="972">10</text><text class="n" x="466" y="972">15</text><text class="n" x="537" y="972">20</text><text class="n" x="609" y="972">25</text><text class="n" x="680" y="972">30</text><text class="n" x="751" y="972">35</text><text class="n" x="822" y="972">40</text><text class="n" x="893" y="972">45</text><text class="n" x="965" y="972">50</text><text class="n" x="1036" y="972">55</text><text class="n" x="1107" y="972">60</text><text class="n" x="1178" y="972">65</text><text class="n" x="1249" y="972">70</text><text class="n" x="1321" y="972">75</text><text class="n" x="1392" y="972">80</text><text class="n" x="1463" y="972">85</text><text class="n" x="1534" y="972">90</text><text class="n" x="1605" y="972">95</text><text class="n" x="1677" y="972">100</text>

<!-- status area -->
<rect y="976" width="1744" height="36" fill="#434343"/>
<path d="M0 976.500H1744" stroke="#2a2a2a"/>
<rect x="0" y="978" width="95" height="20" fill="#dcc4c6" stroke="#eee"/>
<rect x="0" y="1001" width="95" height="14" fill="#f2f2f2"/>
<text x="2" y="1013" font-size="11" fill="#777" style="font-family:'Liberation Mono',monospace">MAXScript Mi</text>
<path d="M102 978V1012" stroke="#222" stroke-width="1.500"/>
<rect x="105" y="980" width="940" height="20" fill="#474747" stroke="#333"/>
<text x="110" y="994" font-size="11.500" fill="#c6c6c6">None Selected</text>
<path d="M105 1004.500H1351" stroke="#222" stroke-width="1.500"/>
<text x="110" y="1019" font-size="11.500" fill="#c6c6c6">Click and drag to select and move objects</text>
<ellipse cx="1059" cy="986" rx="4" ry="5" fill="#a0a0a0"/><rect x="1057" y="990" width="4" height="6" fill="#8a8a8a"/>
<rect x="1081" y="988" width="9" height="8" fill="#ccc"/><path d="M1083 988v-3a2.500 2.500 0 0 1 5 0v3" fill="none" stroke="#ccc" stroke-width="1.300"/>
<rect x="1105" y="982" width="15" height="15" fill="#eee"/><circle cx="1112.500" cy="989.500" r="3.500" fill="none" stroke="#333"/><path d="M1112.500 982v15M1105 989.500h15" stroke="#333" stroke-dasharray="2 6"/>
<text x="1129" y="994" font-size="11" fill="#aaa">X:</text>
<rect x="1140" y="980" width="56" height="19" fill="#5c5c5c"/><path d="M1140 999V980H1196" fill="none" stroke="#111" stroke-width="1.500"/>
<text x="1142" y="994" font-size="11" fill="#222" textLength="52">5699,527c</text>
<text x="1211" y="994" font-size="11" fill="#aaa">Y:</text>
<rect x="1222" y="980" width="56" height="19" fill="#5c5c5c"/><path d="M1222 999V980H1278" fill="none" stroke="#111" stroke-width="1.500"/>
<text x="1224" y="994" font-size="11" fill="#222" textLength="52">9387,512c</text>
<text x="1293" y="994" font-size="11" fill="#aaa">Z:</text>
<rect x="1304" y="980" width="57" height="19" fill="#5c5c5c"/><path d="M1304 999V980H1361" fill="none" stroke="#111" stroke-width="1.500"/>
<text x="1306" y="994" font-size="11" fill="#222">0,0cm</text>
<rect x="1375" y="980" width="99" height="20" fill="#484848" stroke="#333"/>
<text x="1380" y="994" font-size="11" fill="#c6c6c6">Grid = 100,0cm</text>
<path d="M1478 978V1012M1521 978V1012" stroke="#2e2e2e"/>
<circle cx="1492" cy="999" r="3.500" fill="none" stroke="#ddd" stroke-width="1.600"/><path d="M1496 999H1510M1505 999v4M1508 999v4" stroke="#ddd" stroke-width="1.800"/>
<text x="1527" y="994" font-size="11" fill="#d0d0d0">Auto Key</text>
<path d="M1527 1000H1571" stroke="#111" stroke-width="1.500"/>
<rect x="1576" y="980" width="114" height="18" fill="#fff" stroke="#222"/>
<text x="1578" y="993" font-size="11.500" fill="#222">Selected</text>
<path d="M1676 987l4 4 4-4" fill="none" stroke="#888"/>
<path d="M1701 988l5-3v8ZM1707 988l5-3v8ZM1713 985v8" fill="#bbb" stroke="#bbb"/>
<path d="M1730 988l5-3v8ZM1737 985v8M1740 985v8M1743 985v8" fill="#bbb" stroke="#bbb"/>
<rect x="1351" y="1003" width="21" height="12" fill="#3d6fb0"/><rect x="1356" y="1005" width="11" height="8" fill="#ddd"/>
<text x="1380" y="1019" font-size="11.500" fill="#c6c6c6">Add Time Tag</text>
<text x="1530" y="1018" font-size="11.500" fill="#c6c6c6">Set Key</text>
<path d="M1585 1012q3-8 5-8t5 8" fill="none" stroke="#c04040" stroke-width="1.500"/>
<rect x="1600" y="1001" width="90" height="14" fill="#4a4a4a" stroke="#333"/>
<text x="1614" y="1014" font-size="11.500" fill="#c6c6c6">Key Filters...</text>
<path d="M1703 1005v7M1706 1012l-3-3 3-3ZM1712 1012l-3-3 3-3" fill="#bbb" stroke="#bbb"/>
<rect x="1722" y="1003" width="22" height="12" fill="#4a4a4a" stroke="#222"/>
<text x="1725" y="1014" font-size="11" fill="#ccc">0</text>
</svg>
</body></html>
